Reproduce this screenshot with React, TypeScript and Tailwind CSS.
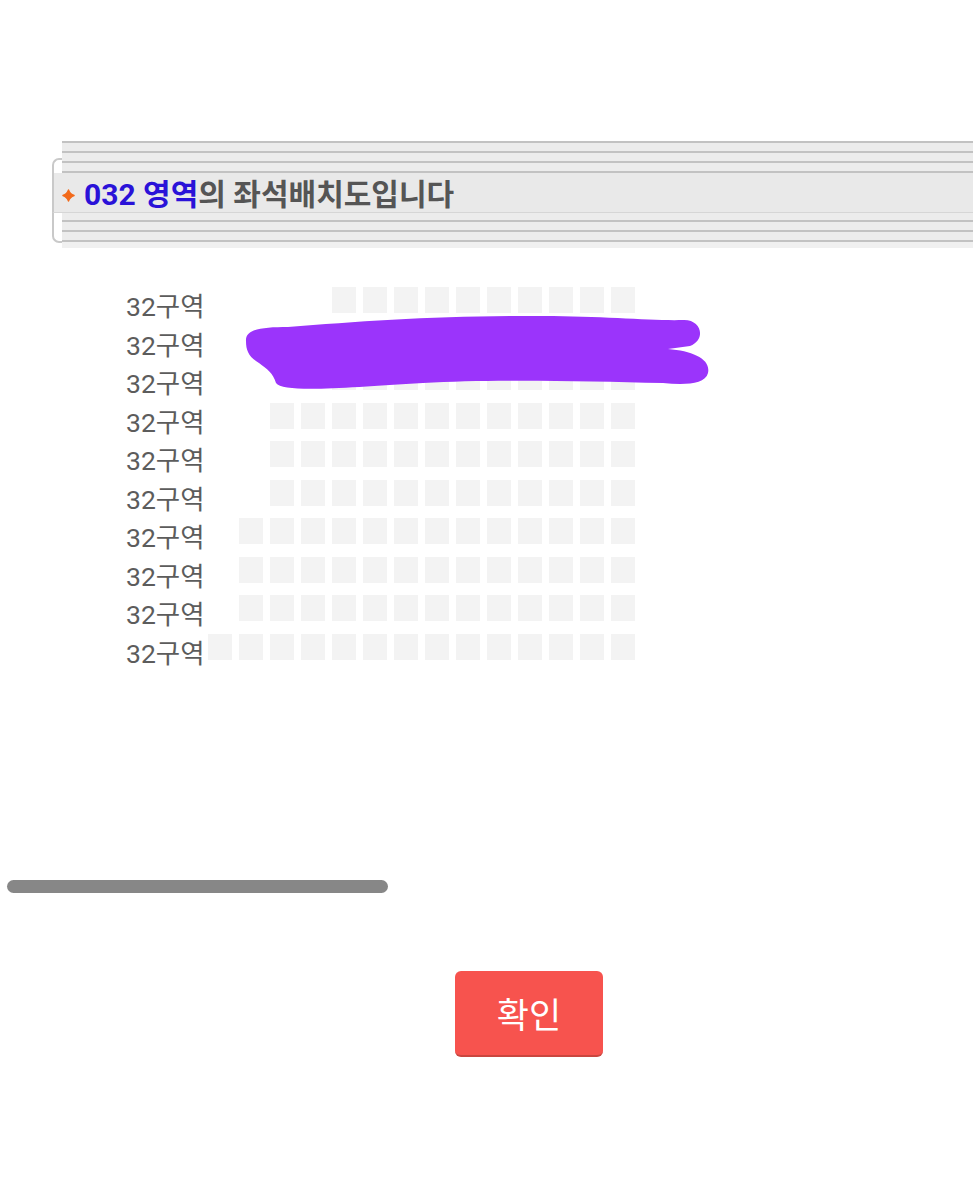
import React from 'react';

const rows = [10, 10, 10, 12, 12, 12, 13, 13, 13, 14];

const Stripe: React.FC<{ h: string; line?: boolean }> = ({ h, line }) => (
  <div className={`${h} ${line ? 'bg-[#c2c2c2]' : 'bg-[#ececec]'}`} />
);

const Header: React.FC = () => (
  <div className="relative ml-[52px] mt-[141px]">
    <div className="absolute left-0 top-[17px] h-[85px] w-[14px] rounded-l-[7px] border-y-2 border-l-2 border-[#c9c9c9]" />
    <div className="relative ml-[10px] flex flex-col">
      <div className="h-[2px] bg-[#c2c2c2]" />
      <div className="h-[8px] bg-[#ececec]" />
      <div className="h-[2px] bg-[#c2c2c2]" />
      <div className="h-[8px] bg-[#ececec]" />
      <div className="h-[2px] bg-[#c2c2c2]" />
      <div className="h-[8px] bg-[#ececec]" />
      <div className="h-[2px] bg-[#c2c2c2]" />
    </div>
    <div className="relative flex h-[40px] items-center border-b border-l-2 border-[#d6d6d6] border-l-[#c9c9c9] bg-[#e9e9e9] pl-[8px]">
      <svg width="13" height="13" viewBox="0 0 14 14" className="mt-[6px]">
        <path d="M7 1 C8 4 10 6 13 7 C10 8 8 10 7 13 C6 10 4 8 1 7 C4 6 6 4 7 1 Z" fill="#f26a1b" stroke="#f26a1b" strokeWidth="1.5" strokeLinejoin="round" />
      </svg>
      <span className="ml-[9px] mt-[5px] font-['Roboto','Noto_Sans_CJK_KR',sans-serif] text-[30px] font-bold leading-none text-[#555555]">
        <span className="text-[#2a12d8]">032 영역</span>의 좌석배치도입니다
      </span>
    </div>
    <div className="relative ml-[10px] flex flex-col">
      <Stripe h="h-[7px]" />
      <Stripe h="h-[2px]" line />
      <Stripe h="h-[8px]" />
      <Stripe h="h-[2px]" line />
      <Stripe h="h-[8px]" />
      <Stripe h="h-[2px]" line />
      <div className="h-[6px] bg-[#f0f0f0]" />
    </div>
  </div>
);

const SeatMap: React.FC = () => (
  <div className="relative mt-[39px] ml-[126px] flex w-[509px] flex-col">
    {rows.map((n, i) => (
      <div key={i} className="flex h-[38.5px] items-start">
        <div className="mt-[7px] w-[82px] whitespace-nowrap font-['Roboto','Noto_Sans_CJK_KR',sans-serif] text-[26.5px] leading-[26px] text-[#5c5c5c]">32구역</div>
        <div className="flex flex-1 justify-end gap-[7px]">
          {Array.from({ length: n }).map((_, j) => (
            <div key={j} className="h-[26px] w-[24px] bg-[#f3f3f3]" />
          ))}
        </div>
      </div>
    ))}
    <svg
      className="absolute left-[117px] top-[26px]"
      width="470"
      height="82"
      viewBox="0 0 470 82"
    >
      <path
        d="M3 28 C2 16 20 14 45 14 C120 8 200 2 300 3 C360 3 410 8 440 7 C458 6 464 26 447 33 L425 36 C450 38 468 46 465 60 C462 72 440 72 420 70 C340 68 250 66 180 70 C100 75 40 80 33 70 C30 60 24 56 16 50 C6 44 3 38 3 28 Z"
        fill="#9b34fb"
      />
    </svg>
  </div>
);

export default function App() {
  return (
    <div className="min-h-[1200px] w-[973px] overflow-hidden bg-white font-['Noto_Sans_CJK_KR','Noto_Sans',sans-serif]">
      <Header />
      <SeatMap />
      <div className="ml-[7px] mt-[208px] h-[13px] w-[381px] rounded-full bg-[#878787]" />
      <div className="ml-[455px] mt-[78px] flex h-[86px] w-[148px] items-center justify-center rounded-[6px] border-b-2 border-[#c9463f] bg-[#f7534e] text-[35px] text-white">
        확인
      </div>
    </div>
  );
}
